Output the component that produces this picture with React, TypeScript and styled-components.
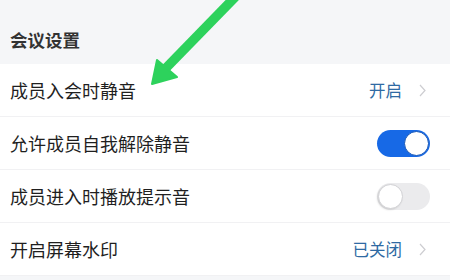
import React, { useState } from "react";
import styled, { createGlobalStyle } from "styled-components";

const GlobalStyle = createGlobalStyle`
  html, body {
    margin: 0;
    padding: 0;
    background: #f5f6f8;
  }
  body {
    font-family: "Noto Sans CJK SC", "Noto Sans", sans-serif;
  }
`;

const Page = styled.div`
  position: relative;
  width: 450px;
  height: 280px;
  overflow: hidden;
  background: #f5f6f8;
`;

const SectionTitle = styled.div`
  height: 64px;
  box-sizing: border-box;
  padding: 28px 0 0 10px;
  font-size: 17.5px;
  line-height: 24px;
  font-weight: 600;
  color: #333;
`;

const List = styled.div`
  background: #fff;
`;

const Row = styled.div`
  height: 52px;
  display: flex;
  align-items: center;
  justify-content: space-between;
  padding: 0 20px 0 10px;
  border-bottom: 1px solid #f1f1f3;
`;

const Label = styled.span`
  font-size: 18px;
  color: #1f1f1f;
`;

const Value = styled.div`
  display: flex;
  align-items: center;
  gap: 17px;
  font-size: 16.5px;
  color: #2f6aa3;
`;

const Chevron = styled.svg`
  width: 7px;
  height: 13px;
  margin-right: 4px;
`;

const Switch = styled.button<{ $on: boolean }>`
  position: relative;
  width: 53px;
  height: 27px;
  border: none;
  padding: 0;
  border-radius: 14px;
  background: ${(p) => (p.$on ? "#1769e6" : "#ebebed")};
  cursor: pointer;
`;

const Knob = styled.span<{ $on: boolean }>`
  position: absolute;
  top: 1px;
  left: ${(p) => (p.$on ? "27px" : "1px")};
  width: 25px;
  height: 25px;
  box-sizing: border-box;
  border-radius: 50%;
  background: #fff;
  border: 1.5px solid ${(p) => (p.$on ? "#1556b8" : "#d2d2d5")};
  box-shadow: ${(p) => (p.$on ? "none" : "-1px 1px 2px rgba(0,0,0,0.12)")};
`;

const Arrow = styled.svg`
  position: absolute;
  left: 0;
  top: 0;
  width: 450px;
  height: 280px;
  pointer-events: none;
`;

function Toggle({ initial }: { initial: boolean }) {
  const [on, setOn] = useState(initial);
  return (
    <Switch $on={on} onClick={() => setOn(!on)}>
      <Knob $on={on} />
    </Switch>
  );
}

function More({ text }: { text: string }) {
  return (
    <Value>
      {text}
      <Chevron viewBox="0 0 7 13">
        <path d="M1 1 L6 6.5 L1 12" fill="none" stroke="#cdcdd1" strokeWidth="1.2" />
      </Chevron>
    </Value>
  );
}

export default function App() {
  return (
    <Page>
      <GlobalStyle />
      <SectionTitle>会议设置</SectionTitle>
      <List>
        <Row>
          <Label>成员入会时静音</Label>
          <More text="开启" />
        </Row>
        <Row>
          <Label>允许成员自我解除静音</Label>
          <Toggle initial={true} />
        </Row>
        <Row>
          <Label>成员进入时播放提示音</Label>
          <Toggle initial={false} />
        </Row>
        <Row>
          <Label>开启屏幕水印</Label>
          <More text="已关闭" />
        </Row>
      </List>
      <Arrow viewBox="0 0 450 280">
        <line x1="242" y1="-10" x2="166" y2="68" stroke="#2dd25c" strokeWidth="9.5" />
        <polygon points="152,84 157,60 177,77" fill="#2dd25c" stroke="#2dd25c" strokeWidth="2" strokeLinejoin="round" />
      </Arrow>
    </Page>
  );
}
